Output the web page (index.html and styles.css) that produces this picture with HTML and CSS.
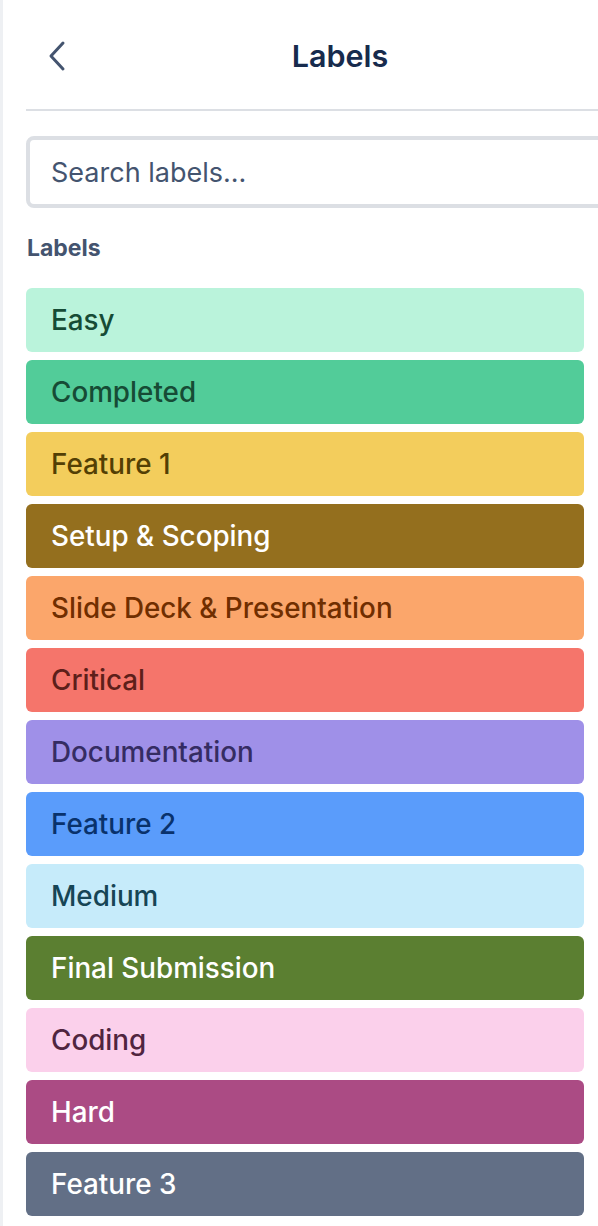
FILE: index.html
```html
<!DOCTYPE html>
<html>
<head>
<meta charset="utf-8">
<link rel="stylesheet" href="styles.css">
</head>
<body>
<div class="edge"></div>
<div class="panel">
  <header class="head">
    <button class="back" aria-label="Back">
      <svg width="20" height="32" viewBox="0 0 20 32"><path d="M15 3 L3 16 L15 29" fill="none" stroke="#44546f" stroke-width="3" stroke-linecap="round" stroke-linejoin="round"/></svg>
    </button>
    <h1 class="title">Labels</h1>
    <span></span>
  </header>
  <div class="divider"></div>
  <div class="search">Search labels...</div>
  <h2 class="section">Labels</h2>
  <ul class="labels">
    <li class="lbl c1">Easy</li>
    <li class="lbl c2">Completed</li>
    <li class="lbl c3">Feature 1</li>
    <li class="lbl c4">Setup &amp; Scoping</li>
    <li class="lbl c5">Slide Deck &amp; Presentation</li>
    <li class="lbl c6">Critical</li>
    <li class="lbl c7">Documentation</li>
    <li class="lbl c8">Feature 2</li>
    <li class="lbl c9">Medium</li>
    <li class="lbl c10">Final Submission</li>
    <li class="lbl c11">Coding</li>
    <li class="lbl c12">Hard</li>
    <li class="lbl c13">Feature 3</li>
  </ul>
</div>
</body>
</html>
```

FILE: styles.css
```css
html, body {
  margin: 0;
  padding: 0;
  background: #ffffff;
  overflow: hidden;
  width: 598px;
  height: 1226px;
}
body {
  font-family: Inter, "Noto Sans", "Liberation Sans", sans-serif;
  position: relative;
}
.edge {
  position: absolute;
  left: 0;
  top: 0;
  width: 3px;
  height: 1226px;
  background: #eef0f3;
}
.panel {
  margin-left: 26px;
  width: 628px;
  display: flex;
  flex-direction: column;
}
.head {
  height: 109px;
  display: grid;
  grid-template-columns: 1fr auto 1fr;
  align-items: center;
}
.back {
  justify-self: start;
  margin-left: 22px;
  margin-top: 2px;
  border: 0;
  background: none;
  padding: 0;
  width: 20px;
  height: 32px;
  display: flex;
}
.title {
  margin: 0;
  font-size: 30.5px;
  font-weight: 600;
  color: #172b4d;
  margin-top: 2px;
}
.divider {
  height: 2px;
  background: #dcdfe4;
}
.search {
  margin-top: 25px;
  height: 64px;
  border: 4px solid #dcdfe4;
  border-radius: 8px;
  display: flex;
  align-items: center;
  padding-left: 21px;
  font-size: 27px;
  color: #44546f;
}
.section {
  margin: 26px 0 0 1px;
  font-size: 23px;
  font-weight: 700;
  color: #44546f;
  line-height: 28px;
}
.labels {
  list-style: none;
  margin: 26px 0 0 0;
  padding: 0;
  width: 558px;
  display: flex;
  flex-direction: column;
  gap: 8px;
}
.lbl {
  height: 64px;
  border-radius: 6px;
  display: flex;
  align-items: center;
  padding-left: 25px;
  font-size: 27.8px;
  font-weight: 500;
}
.c1 { background: #baf3db; color: #164b35; }
.c2 { background: #52cc99; color: #164b35; }
.c3 { background: #f3cd5c; color: #533f04; }
.c4 { background: #946f1e; color: #ffffff; }
.c5 { background: #fba66b; color: #702e00; }
.c6 { background: #f5756b; color: #5d1f1a; }
.c7 { background: #9f90e8; color: #352c63; }
.c8 { background: #5a9cfb; color: #09326c; }
.c9 { background: #c6ebfa; color: #164555; }
.c10 { background: #5b7f31; color: #ffffff; }
.c11 { background: #fbd0eb; color: #50253f; }
.c12 { background: #ab4b84; color: #ffffff; }
.c13 { background: #626f86; color: #ffffff; }
```
